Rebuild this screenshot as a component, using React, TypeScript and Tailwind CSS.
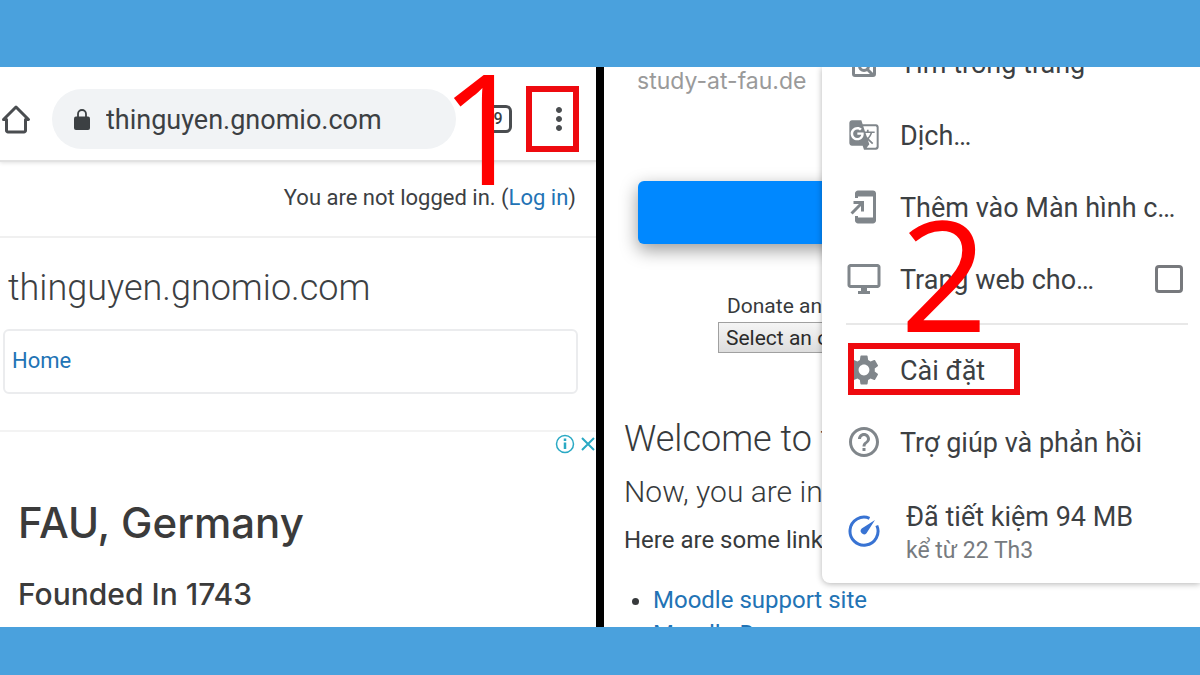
import { ReactNode } from "react";
import {
    MdAddToHomeScreen,
    MdGTranslate,
    MdHelpOutline,
    MdMoreVert,
    MdOutlineDesktopWindows,
    MdSettings,
} from "react-icons/md";

const HomeIcon = () => (
    <svg viewBox="0 0 30 30" className="size-[30px]" fill="none" stroke="currentColor" strokeWidth="3" strokeLinejoin="round" aria-hidden="true">
        <path d="M2.500 15.500 15 3l12.500 12.500H24.500V26.500a1.500 1.500 0 0 1-1.500 1.500H7a1.500 1.500 0 0 1-1.500-1.500V15.500Z" />
    </svg>
);

const LockIcon = () => (
    <svg viewBox="0 0 16 21" className="h-[21px] w-4 shrink-0 text-[#3c4043]" fill="none" aria-hidden="true">
        <rect y="7.500" width="16" height="13.500" rx="2" fill="currentColor" />
        <path d="M4 8V5a4 4 0 0 1 8 0v3" stroke="currentColor" strokeWidth="1.800" />
    </svg>
);

const FindIcon = () => (
    <svg viewBox="0 0 24 28" className="h-7 w-6 shrink-0" fill="none" stroke="currentColor" strokeWidth="3" aria-hidden="true">
        <rect x="1.500" y="1.500" width="21" height="25" rx="1.500" />
        <circle cx="12" cy="17" r="4.500" />
        <path d="m15 20 6 6" />
    </svg>
);

const DataSaverIcon = () => (
    <svg viewBox="0 0 32 32" className="size-8 shrink-0" fill="none" aria-hidden="true">
        <path d="M21.500 3.300A14 14 0 1 0 28.800 10.500" stroke="#3873d3" strokeWidth="3" />
        <path d="M27 5 18.500 18.300a3.200 3.200 0 0 1-4.800-4.700Z" fill="#3873d3" />
    </svg>
);

const AdInfoIcon = () => (
    <svg viewBox="0 0 20 20" className="size-5" fill="none" stroke="currentColor" aria-hidden="true">
        <circle cx="10" cy="10" r="8.500" strokeWidth="1.500" />
        <path d="M10 8.500V15M10 4.500V7" strokeWidth="2.500" />
    </svg>
);

const AdCloseIcon = () => (
    <svg viewBox="0 0 16 16" className="size-4" fill="none" stroke="currentColor" strokeWidth="2" aria-hidden="true">
        <path d="m2 2 12 12M14 2 2 14" />
    </svg>
);

const MenuItem = ({ icon, label, children }: { icon: ReactNode; label: string; children?: ReactNode }) => (
    <li className="relative">
        <button type="button" className="flex h-[72px] w-full items-center text-left">
            <span className="ml-[26px] flex w-8 shrink-0 justify-center text-[#80868b]">{icon}</span>
            <span className="ml-5 pt-[3px] whitespace-nowrap">{label}</span>
        </button>
        {children}
    </li>
);

const BrowserPanel = () => (
    <section className="min-w-0 flex-1 overflow-hidden bg-white text-[#3c4043]">
        <header className="relative flex h-[95px] items-center border-b-2 border-[#e2e2e2] pt-[11px] shadow-[0_1px_4px_rgba(0,0,0,0.12)]">
            <button type="button" aria-label="Home page" className="ml-px text-[#4a4d50]">
                <HomeIcon />
            </button>
            <div className="ml-[21px] flex h-[60px] min-w-0 flex-1 items-center rounded-full bg-[#f1f3f5] pl-[22px]">
                <LockIcon />
                <input
                    aria-label="Address"
                    defaultValue="thinguyen.gnomio.com"
                    className="ml-4 w-full min-w-0 bg-transparent pt-[2px] text-[27px] leading-8 outline-none"
                />
            </div>
            <button type="button" aria-label="Tabs" className="ml-7 flex size-7 items-center justify-center rounded-md border-3 border-[#4a4d50] text-[16px] font-medium">
                9
            </button>
            <button type="button" aria-label="More options" className="mr-[17px] ml-[14px] flex h-[66px] w-[53px] items-center justify-end border-6 border-[#ee0a0f] text-[#4a4d50]">
                <MdMoreVert className="-mr-1 size-9 shrink-0" />
            </button>
            <span className="absolute top-0 right-[68px] font-['Open_Sans',sans-serif] text-[154px] leading-[116px] font-medium text-[#ff0000]">1</span>
        </header>

        <p className="flex h-[76px] items-center justify-end border-b-2 border-[#f0f0f0] pr-5 pb-[3px] text-[22px] whitespace-pre">
            You are not logged in. (<a href="#login" className="text-[#2273b5]">Log in</a>)
        </p>

        <h1 className="mt-7 ml-2 text-[36px] leading-[44px] font-light">thinguyen.gnomio.com</h1>

        <nav aria-label="Breadcrumb" className="mt-[19px] mr-[18px] ml-[3px] flex h-[65px] items-center rounded-md border-2 border-[#ebecee] pb-[2px] pl-[7px] text-[22px]">
            <a href="#home" className="text-[#2273b5]">Home</a>
        </nav>

        <aside className="mt-9 border-t-2 border-[#f3f3f3]">
            <div className="flex items-center justify-end gap-[5px] pt-[2px] text-[#2aa9c4]">
                <button type="button" aria-label="Ad information"><AdInfoIcon /></button>
                <button type="button" aria-label="Close ad"><AdCloseIcon /></button>
            </div>
            <div className="ml-[18px] font-[Inter,sans-serif] font-medium text-[#3b3b3b]">
                <h2 className="mt-11 text-[42px] leading-[50px]">FAU, Germany</h2>
                <p className="mt-7 text-[30px] leading-9">Founded In 1743</p>
            </div>
        </aside>
    </section>
);

const OptionsMenu = () => (
    <div className="absolute top-0 right-0 left-[218px] h-[516px] overflow-hidden rounded-bl-lg bg-white text-[27px] text-[#3c4043] shadow-[0_1px_6px_rgba(0,0,0,0.3)]">
        <ul className="-mt-10">
            <MenuItem icon={<FindIcon />} label="Tìm trong trang" />
            <MenuItem icon={<MdGTranslate className="size-8" />} label="Dịch…" />
            <MenuItem icon={<MdAddToHomeScreen className="size-9 shrink-0" />} label="Thêm vào Màn hình c…" />
            <li className="flex h-[72px] items-center pr-[17px]">
                <MdOutlineDesktopWindows className="ml-6 size-9 shrink-0 text-[#80868b]" aria-hidden="true" />
                <label htmlFor="desktop-site" className="ml-[18px] flex-1 pt-[3px] whitespace-nowrap">Trang web cho…</label>
                <input id="desktop-site" type="checkbox" className="size-7 appearance-none rounded-sm border-3 border-[#77797d]" />
            </li>
            <li role="separator" className="mt-2 mr-3 mb-[9px] ml-6 h-[2px] bg-[#e8e8e8]" />
            <MenuItem icon={<MdSettings className="size-9 shrink-0" />} label="Cài đặt">
                <span className="pointer-events-none absolute top-[9px] left-[26px] h-[52px] w-[172px] border-6 border-[#ee0a0f]" />
                <span className="absolute bottom-[59px] left-[78px] font-['Open_Sans',sans-serif] text-[154px] leading-[150px] font-medium text-[#ff0000]">2</span>
            </MenuItem>
            <MenuItem icon={<MdHelpOutline className="size-9 shrink-0" />} label="Trợ giúp và phản hồi" />
            <li>
                <button type="button" className="flex h-[105px] w-full items-center text-left">
                    <span className="ml-[26px]"><DataSaverIcon /></span>
                    <span className="ml-[26px] flex flex-col pt-1">
                        <span className="leading-9">Đã tiết kiệm 94 MB</span>
                        <span className="text-[23px] leading-8 text-[#777b80]">kể từ 22 Th3</span>
                    </span>
                </button>
            </li>
        </ul>
    </div>
);

const MenuPanel = () => (
    <section className="relative min-w-0 flex-1 overflow-hidden bg-white text-[#373a3c]">
        <p className="ml-[33px] font-[Inter,sans-serif] text-[23px] leading-7 text-[#9a9a9a]">study-at-fau.de</p>
        <button type="button" aria-label="Open advertisement" className="mt-[86px] ml-[34px] block h-[63px] w-full rounded-md bg-[#0088ff] shadow-[0_6px_18px_rgba(0,0,0,0.4)]" />

        <div className="mt-[46px] ml-[114px] text-[21px] whitespace-nowrap">
            <label htmlFor="donation" className="ml-[9px] block leading-8">Donate an amount</label>
            <select id="donation" className="block h-[31px] w-[300px] appearance-none border border-[#a0a0a0] bg-linear-to-b from-[#f5f5f5] to-[#dddddd] pl-[7px] leading-7 text-[#2b2b2b]">
                <option>Select an option</option>
            </select>
        </div>

        <div className="ml-5 whitespace-nowrap">
            <h2 className="mt-16 text-[36px] leading-[44px] font-light">Welcome to the site</h2>
            <h3 className="mt-[11px] text-[30px] leading-10 font-light">Now, you are in control</h3>
            <p className="mt-3 text-[24px] leading-8">Here are some links to help</p>
            <ul className="mt-7 list-disc space-y-[2px] pl-[29px] text-[24px] leading-8">
                <li><a href="#support" className="text-[#2273b5]">Moodle support site</a></li>
                <li><a href="#docs" className="text-[#2273b5]">Moodle Docs</a></li>
            </ul>
        </div>
        <OptionsMenu />
    </section>
);

export default function App() {
    return (
        <div className="flex h-screen flex-col bg-[#4aa1dd] pt-[67px] pb-12 font-[Roboto,sans-serif]">
            <main className="flex min-h-0 flex-1">
                <BrowserPanel />
                <div className="w-2 bg-black" />
                <MenuPanel />
            </main>
        </div>
    );
}
